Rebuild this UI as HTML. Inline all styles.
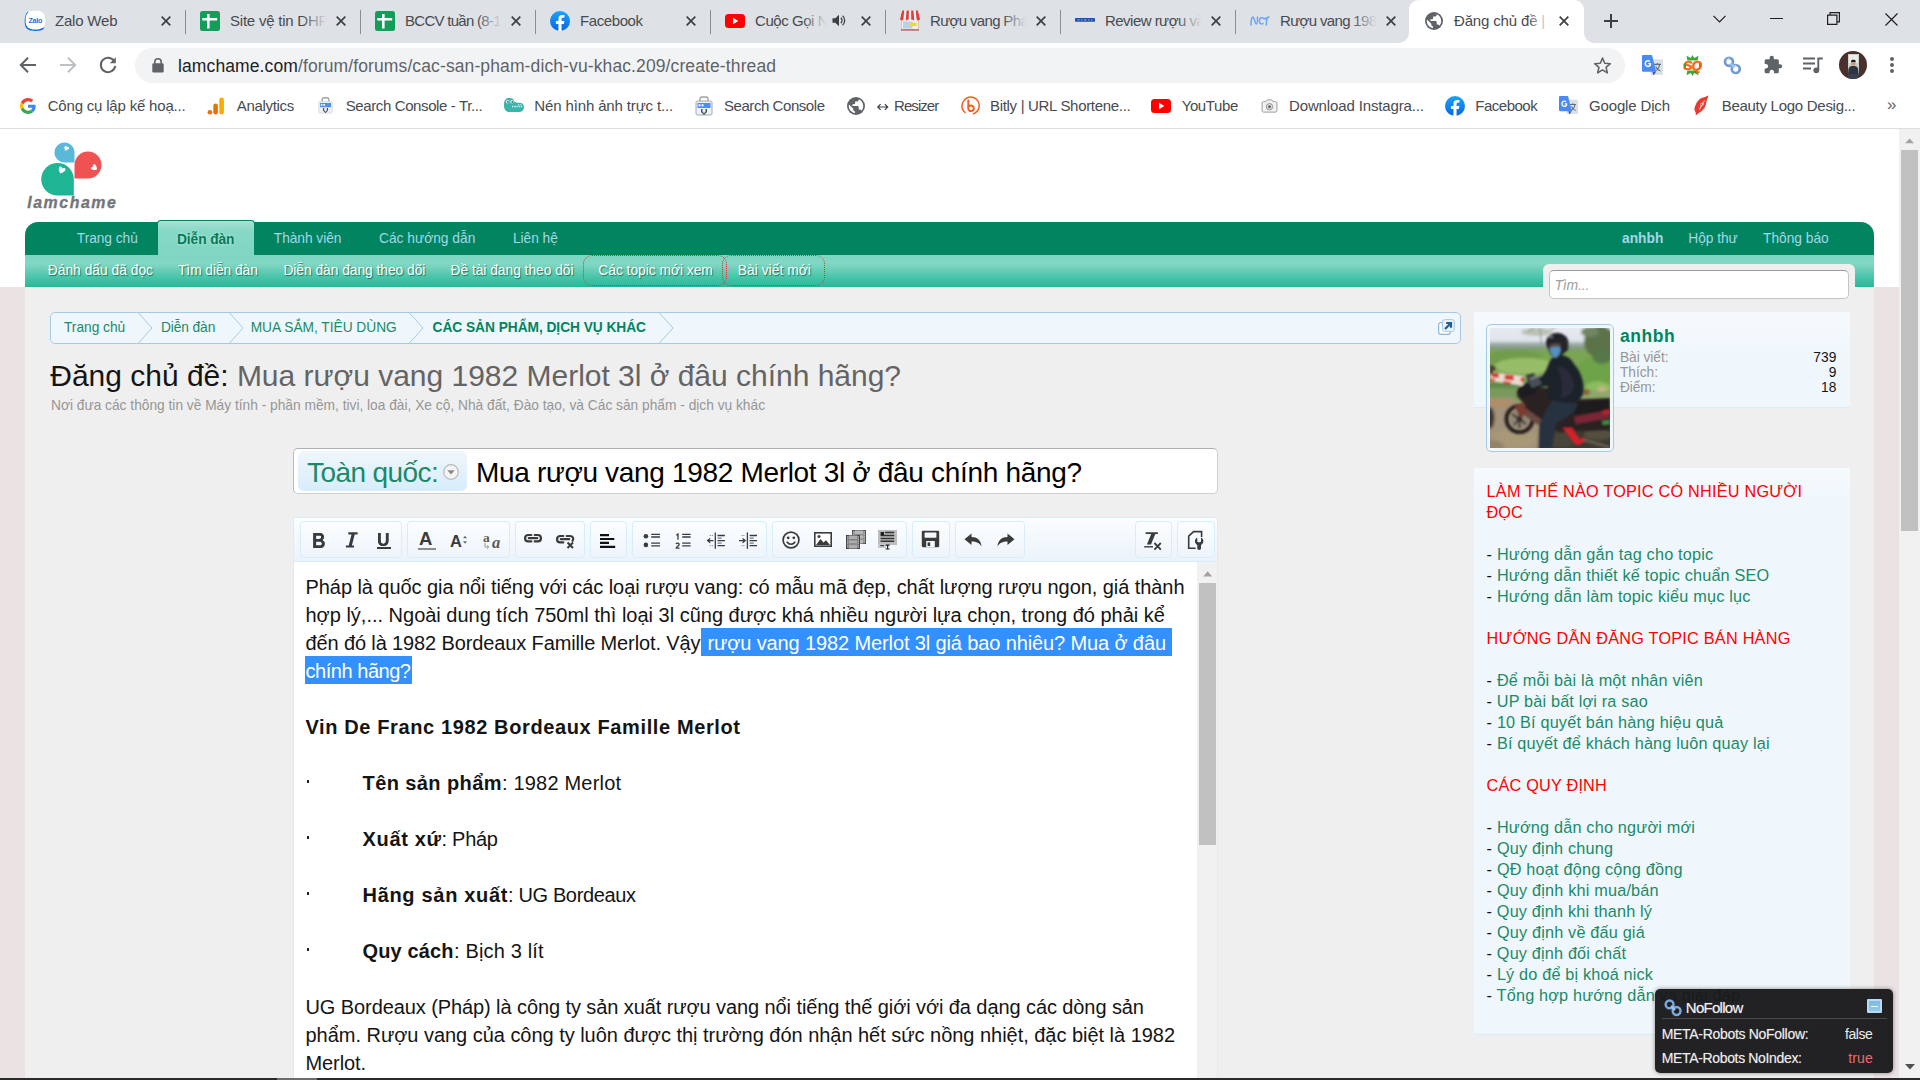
<!DOCTYPE html>
<html><head><meta charset="utf-8"><title>page</title>
<style>

*{margin:0;padding:0;box-sizing:border-box}
html,body{width:1920px;height:1080px;overflow:hidden;background:#fff;font-family:"Liberation Sans",sans-serif}
#root{position:relative;width:1920px;height:1080px;overflow:hidden;background:#efefef}
.a{position:absolute}
.t{position:absolute;white-space:pre;display:block}
svg{position:absolute;overflow:visible}

</style></head><body>
<div id="root">
<div class="a" style="left:0px;top:0px;width:1920px;height:43px;background:#dee1e6"></div>
<svg style="left:1398px;top:0" width="197" height="43" viewBox="0 0 197 43"><path d="M0 43 C6 43 11 39 11 32 L11 11 C11 4 15 0 22 0 L175 0 C182 0 186 4 186 11 L186 32 C186 39 191 43 197 43 Z" fill="#fff"/></svg>
<div class="a" style="left:0px;top:43px;width:1920px;height:45px;background:#fff"></div>
<div class="a" style="left:0px;top:88px;width:1920px;height:40px;background:#fff"></div>
<div class="a" style="left:0px;top:128px;width:1920px;height:1px;background:#dcdee2"></div>
<span class="t" style="left:55.00px;top:10.81px;font-size:15px;line-height:20px;color:#474b4f;letter-spacing:-0.203px;">Zalo Web</span>
<svg style="left:161px;top:15.5px" width="10" height="10" viewBox="0 0 10 10"><path d="M0.7 0.7 L9.3 9.3 M9.3 0.7 L0.7 9.3" stroke="#3c4043" stroke-width="1.7" fill="none"/></svg>
<div class="a" style="left:185.3px;top:10px;width:1.1px;height:24px;background:#8a8d92"></div>
<span class="t" style="left:230.00px;top:10.81px;font-size:15px;line-height:20px;color:#474b4f;letter-spacing:-0.227px;">Site vệ tin DHP</span>
<div class="a" style="left:302px;top:6px;width:40px;height:30px;background:linear-gradient(90deg,rgba(222,225,230,0) 0%,#dee1e6 62%)"></div>
<svg style="left:336px;top:15.5px" width="10" height="10" viewBox="0 0 10 10"><path d="M0.7 0.7 L9.3 9.3 M9.3 0.7 L0.7 9.3" stroke="#3c4043" stroke-width="1.7" fill="none"/></svg>
<div class="a" style="left:360.3px;top:10px;width:1.1px;height:24px;background:#8a8d92"></div>
<span class="t" style="left:405.00px;top:10.81px;font-size:15px;line-height:20px;color:#474b4f;letter-spacing:-0.718px;">BCCV tuần (8-1</span>
<div class="a" style="left:477px;top:6px;width:40px;height:30px;background:linear-gradient(90deg,rgba(222,225,230,0) 0%,#dee1e6 62%)"></div>
<svg style="left:511px;top:15.5px" width="10" height="10" viewBox="0 0 10 10"><path d="M0.7 0.7 L9.3 9.3 M9.3 0.7 L0.7 9.3" stroke="#3c4043" stroke-width="1.7" fill="none"/></svg>
<div class="a" style="left:535.3px;top:10px;width:1.1px;height:24px;background:#8a8d92"></div>
<span class="t" style="left:580.00px;top:10.81px;font-size:15px;line-height:20px;color:#474b4f;letter-spacing:-0.411px;">Facebook</span>
<svg style="left:686px;top:15.5px" width="10" height="10" viewBox="0 0 10 10"><path d="M0.7 0.7 L9.3 9.3 M9.3 0.7 L0.7 9.3" stroke="#3c4043" stroke-width="1.7" fill="none"/></svg>
<div class="a" style="left:710.3px;top:10px;width:1.1px;height:24px;background:#8a8d92"></div>
<span class="t" style="left:755.00px;top:10.81px;font-size:15px;line-height:20px;color:#474b4f;letter-spacing:-0.447px;">Cuộc Gọi N</span>
<div class="a" style="left:802px;top:6px;width:40px;height:30px;background:linear-gradient(90deg,rgba(222,225,230,0) 0%,#dee1e6 62%)"></div>
<svg style="left:861px;top:15.5px" width="10" height="10" viewBox="0 0 10 10"><path d="M0.7 0.7 L9.3 9.3 M9.3 0.7 L0.7 9.3" stroke="#3c4043" stroke-width="1.7" fill="none"/></svg>
<div class="a" style="left:885.3px;top:10px;width:1.1px;height:24px;background:#8a8d92"></div>
<span class="t" style="left:930.00px;top:10.81px;font-size:15px;line-height:20px;color:#474b4f;letter-spacing:-0.656px;">Rượu vang Phá</span>
<div class="a" style="left:1002px;top:6px;width:40px;height:30px;background:linear-gradient(90deg,rgba(222,225,230,0) 0%,#dee1e6 62%)"></div>
<svg style="left:1036px;top:15.5px" width="10" height="10" viewBox="0 0 10 10"><path d="M0.7 0.7 L9.3 9.3 M9.3 0.7 L0.7 9.3" stroke="#3c4043" stroke-width="1.7" fill="none"/></svg>
<div class="a" style="left:1060.3px;top:10px;width:1.1px;height:24px;background:#8a8d92"></div>
<span class="t" style="left:1105.00px;top:10.81px;font-size:15px;line-height:20px;color:#474b4f;letter-spacing:-0.528px;">Review rượu và</span>
<div class="a" style="left:1177px;top:6px;width:40px;height:30px;background:linear-gradient(90deg,rgba(222,225,230,0) 0%,#dee1e6 62%)"></div>
<svg style="left:1211px;top:15.5px" width="10" height="10" viewBox="0 0 10 10"><path d="M0.7 0.7 L9.3 9.3 M9.3 0.7 L0.7 9.3" stroke="#3c4043" stroke-width="1.7" fill="none"/></svg>
<div class="a" style="left:1235.3px;top:10px;width:1.1px;height:24px;background:#8a8d92"></div>
<span class="t" style="left:1280.00px;top:10.81px;font-size:15px;line-height:20px;color:#474b4f;letter-spacing:-0.656px;">Rượu vang 198</span>
<div class="a" style="left:1352px;top:6px;width:40px;height:30px;background:linear-gradient(90deg,rgba(222,225,230,0) 0%,#dee1e6 62%)"></div>
<svg style="left:1386px;top:15.5px" width="10" height="10" viewBox="0 0 10 10"><path d="M0.7 0.7 L9.3 9.3 M9.3 0.7 L0.7 9.3" stroke="#3c4043" stroke-width="1.7" fill="none"/></svg>
<span class="t" style="left:1454.00px;top:10.81px;font-size:15px;line-height:20px;color:#474b4f;letter-spacing:-0.158px;">Đăng chủ đề | Là</span>
<div class="a" style="left:1527px;top:6px;width:40px;height:30px;background:linear-gradient(90deg,rgba(255,255,255,0) 0%,#fff 60%)"></div>
<svg style="left:1558.6px;top:15.5px" width="10" height="10" viewBox="0 0 10 10"><path d="M0.7 0.7 L9.3 9.3 M9.3 0.7 L0.7 9.3" stroke="#3c4043" stroke-width="1.7" fill="none"/></svg>
<svg style="left:1604px;top:13.5px" width="14" height="14" viewBox="0 0 14 14"><path d="M7 0 V14 M0 7 H14" stroke="#3c4043" stroke-width="2" fill="none"/></svg>
<svg style="left:1713px;top:15px" width="13" height="8" viewBox="0 0 13 8"><path d="M0.5 0.8 L6.5 6.8 L12.5 0.8" stroke="#1f1f1f" stroke-width="1.2" fill="none"/></svg>
<div class="a" style="left:1770px;top:18px;width:13px;height:1.2px;background:#1f1f1f"></div>
<svg style="left:1827px;top:12px" width="13" height="13" viewBox="0 0 13 13"><path d="M0.6 3.1 H9.9 V12.4 H0.6 Z M3.1 3.1 V0.6 H12.4 V9.9 H9.9" stroke="#1f1f1f" stroke-width="1.2" fill="none"/></svg>
<svg style="left:1884.5px;top:12.5px" width="13" height="13" viewBox="0 0 13 13"><path d="M0.5 0.5 L12.5 12.5 M12.5 0.5 L0.5 12.5" stroke="#1f1f1f" stroke-width="1.2" fill="none"/></svg>
<svg style="left:24px;top:10px" width="22" height="22" viewBox="0 0 22 22"><path d="M4 1.5 C0.5 4 0 12 1.5 16.5 C3 21 10 21.5 16.5 20.5 C18.5 20 19.8 19 20.3 17.5 L12 19 L4 14 Z" fill="#0b6af0"/><rect x="1.6" y="0.8" width="19.6" height="18.6" rx="7.2" fill="#fff"/><text x="11.3" y="12.6" font-size="7.2" font-weight="700" text-anchor="middle" fill="#1a6df0" font-family="Liberation Sans" letter-spacing="-0.3">Zalo</text></svg>
<svg style="left:200px;top:11px" width="20" height="20" viewBox="0 0 20 20"><rect width="20" height="20" rx="2.5" fill="#129d58"/><path d="M7 3 H9.6 V17.5 H7 Z M2.3 6.9 H17.2 V9.5 H2.3 Z" fill="#fff"/></svg>
<svg style="left:375px;top:11px" width="20" height="20" viewBox="0 0 20 20"><rect width="20" height="20" rx="2.5" fill="#129d58"/><path d="M7 3 H9.6 V17.5 H7 Z M2.3 6.9 H17.2 V9.5 H2.3 Z" fill="#fff"/></svg>
<svg style="left:550px;top:11px" width="20" height="20" viewBox="0 0 20 20"><defs><linearGradient id="fbg550" x1="0" y1="0" x2="0" y2="1"><stop offset="0" stop-color="#19a4fe"/><stop offset="1" stop-color="#0866e2"/></linearGradient></defs><circle cx="10" cy="10" r="10" fill="url(#fbg550)"/><path d="M13.9 12.9 L14.35 10 H11.56 V8.12 C11.56 7.33 11.95 6.56 13.2 6.56 H14.46 V4.1 C14.46 4.1 13.31 3.9 12.21 3.9 C9.92 3.9 8.44 5.29 8.44 7.8 V10 H5.9 V12.9 H8.44 V19.88 C8.95 19.96 9.47 20 10 20 C10.53 20 11.05 19.96 11.56 19.88 V12.9 Z" fill="#fff"/></svg>
<svg style="left:725px;top:14px" width="20" height="14" viewBox="0 0 20 14"><rect width="20" height="14" rx="3.5" fill="#f00"/><path d="M8 3.8 L13.3 7 L8 10.2 Z" fill="#fff"/></svg>
<svg style="left:832px;top:14px" width="14" height="13" viewBox="0 0 14 13"><path d="M0.5 4.3 H3.3 L7 0.8 V12.2 L3.3 8.7 H0.5 Z" fill="#3c4043"/><path d="M8.8 3.8 C10.4 5 10.4 8 8.8 9.2 M10.6 1.8 C13.4 4 13.4 9 10.6 11.2" stroke="#3c4043" stroke-width="1.3" fill="none"/></svg>
<svg style="left:900px;top:10px" width="20" height="21" viewBox="0 0 20 21">
<rect x="1.4" y="9" width="17.2" height="10.6" fill="#eceff2" stroke="#c9b9a4" stroke-width="0.7"/>
<rect x="3" y="11.5" width="9.5" height="7" fill="#b9d0ea"/><rect x="10" y="12.8" width="6.6" height="3.2" fill="#f5d33a"/>
<rect x="1" y="19.3" width="18" height="1.3" fill="#b25a50"/>
<defs><clipPath id="awn"><path d="M2 0.5 H18 L20 8.6 C20 11.2 16 11.2 16 8.6 C16 11.2 12 11.2 12 8.6 C12 11.2 8 11.2 8 8.6 C8 11.2 4 11.2 4 8.6 C4 11.2 0 11.2 0 8.6 Z"/></clipPath></defs>
<g clip-path="url(#awn)"><rect x="0" y="0" width="20" height="11" fill="#f4f4f4"/>
<path d="M2 0 H4.3 L3.2 11 H-0.5 Z M6.6 0 H8.9 L8.7 11 H5.7 Z M11.1 0 H13.4 L14.3 11 H11.3 Z M15.7 0 H18 L20.5 11 H16.8 Z" fill="#e23b3b"/></g>
</svg>
<svg style="left:1075px;top:18.3px" width="20" height="4" viewBox="0 0 20 4"><rect x="0" y="0" width="20" height="3.8" rx="0.8" fill="#1f4fa8"/><path d="M2.5 1.9 H4.5 M6 1.9 H7.5 M9 1.9 H11.5 M13 1.9 H14.5 M16 1.9 H17.5" stroke="#a9c4ee" stroke-width="0.9"/></svg>
<svg style="left:1250px;top:15px" width="20" height="12" viewBox="0 0 20 12"><path d="M1 10 C1 4 2 2 3 2 C4 2 5 9 6.5 9 C7.5 9 7.5 3 7.5 2 M13 3 C10 2 9 5 9.5 7 C10 9.5 12.5 9 13 8.5 M14 4 L19 2 M16.8 2.8 L16.3 10" stroke="#6aa5f5" stroke-width="1.5" fill="none" stroke-linecap="round"/></svg>
<svg style="left:1425px;top:11.5px" width="18" height="18" viewBox="0 0 20 20"><circle cx="10" cy="10" r="10" fill="#5f6368"/><path d="M8.9 17.9 C5 17.4 2 14 2 10 C2 9.4 2.1 8.8 2.2 8.2 L7 13 V14 C7 15.1 7.9 16 9 16 Z M15.9 15.4 C15.6 14.6 14.9 14 14 14 H13 V11 C13 10.4 12.6 10 12 10 H6 V8 H8 C8.6 8 9 7.6 9 7 V5 H11 C12.1 5 13 4.1 13 3 V2.6 C15.9 3.8 18 6.6 18 10 C18 12.1 17.2 14 15.9 15.4 Z" fill="#fff"/></svg>
<svg style="left:19px;top:55.5px" width="18" height="18" viewBox="0 0 18 18"><path d="M17 9 H2.5 M9 1.8 L1.8 9 L9 16.2" stroke="#5f6368" stroke-width="2" fill="none"/></svg>
<svg style="left:59px;top:55.5px" width="18" height="18" viewBox="0 0 18 18"><path d="M1 9 H15.5 M9 1.8 L16.2 9 L9 16.2" stroke="#bdc1c6" stroke-width="2" fill="none"/></svg>
<svg style="left:99px;top:55.5px" width="18" height="18" viewBox="0 0 18 18"><path d="M15.2 5.2 A7.2 7.2 0 1 0 16.2 9.8" stroke="#5f6368" stroke-width="2" fill="none"/><path d="M16.8 1.2 V7.2 H10.8 Z" fill="#5f6368"/></svg>
<div class="a" style="left:135px;top:48px;width:1490px;height:35px;background:#f1f3f4;border-radius:17.5px"></div>
<svg style="left:151.5px;top:58px" width="12" height="15" viewBox="0 0 12 15"><rect x="0.3" y="5.3" width="11.4" height="9.2" rx="1.3" fill="#5f6368"/><path d="M2.8 5.8 V3.8 C2.8 -0.2 9.2 -0.2 9.2 3.8 V5.8" stroke="#5f6368" stroke-width="1.6" fill="none"/></svg>
<span class="t" style="left:178.00px;top:55.41px;font-size:17.5px;line-height:23px;color:#5f6368;letter-spacing:0.112px;"><span style="color:#202124">lamchame.com</span>/forum/forums/cac-san-pham-dich-vu-khac.209/create-thread</span>
<svg style="left:1593px;top:55.5px" width="19" height="19" viewBox="0 0 24 24"><path d="M12 2.6 L14.8 9.1 L21.9 9.7 L16.5 14.4 L18.1 21.3 L12 17.6 L5.9 21.3 L7.5 14.4 L2.1 9.7 L9.2 9.1 Z" stroke="#5f6368" stroke-width="2" fill="none" stroke-linejoin="round"/></svg>
<svg style="left:1642px;top:55px" width="21" height="21" viewBox="0 0 20 20"><rect x="8" y="4" width="12" height="15" rx="1.2" fill="#dcdfe3"/><path d="M11.5 9 H18 M14.7 7.5 V9 M12.5 15 C15 14 16.5 11.5 16.8 9 M13 11 C14 13 15.5 14.5 17.5 15.2" stroke="#5f6f80" stroke-width="1.1" fill="none"/><path d="M1.2 0 H9.5 L13.5 16 H1.2 C0.5 16 0 15.5 0 14.8 V1.2 C0 0.5 0.5 0 1.2 0 Z" fill="#4a8af4"/><path d="M9.8 16 L13.5 16 L11 19.5 Z" fill="#3a5fc0"/><path d="M8.6 7.6 H6 V8.9 H7.4 C7.2 9.8 6.5 10.3 5.7 10.3 C4.6 10.3 3.8 9.4 3.8 8.2 C3.8 7 4.6 6.1 5.7 6.1 C6.3 6.1 6.7 6.3 7 6.6 L7.9 5.7 C7.3 5.1 6.6 4.8 5.7 4.8 C3.9 4.8 2.4 6.3 2.4 8.2 C2.4 10.1 3.9 11.6 5.7 11.6 C7.6 11.6 8.8 10.3 8.8 8.3 C8.8 8 8.7 7.8 8.6 7.6 Z" fill="#fff"/></svg>
<svg style="left:1683px;top:55px" width="19" height="21" viewBox="0 0 19 21"><path d="M9.5 0 L11.2 3 L15.5 0.8 L14.6 5.5 L4.4 5.5 L3.5 0.8 L7.8 3 Z" fill="#3aa935"/><path d="M9.5 21 L11.2 18 L15.5 20.2 L14.6 15.5 L4.4 15.5 L3.5 20.2 L7.8 18 Z" fill="#3aa935"/><path d="M0.5 9 L3 7 L3 14 L0.5 12.5 Z M18.5 9 L16 7 L16 14 L18.5 12.5 Z" fill="#3aa935"/><text x="9.3" y="15.3" font-size="13.5" font-weight="700" font-style="italic" text-anchor="middle" fill="#f26a10" stroke="#f26a10" stroke-width="0.5" font-family="Liberation Sans" letter-spacing="-1">SQ</text></svg>
<svg style="left:1723px;top:56px" width="19" height="19" viewBox="0 0 19 19"><circle cx="6" cy="5.8" r="4" stroke="#6f9ccf" stroke-width="2.7" fill="none"/><circle cx="12.8" cy="13" r="4" stroke="#6f9ccf" stroke-width="2.7" fill="none"/><path d="M7.4 7.4 L11.4 11.4" stroke="#9dbfe4" stroke-width="2.6"/><path d="M3.2 4.2 A3.6 3.6 0 0 1 6.6 2.2 M10 11.4 A3.6 3.6 0 0 1 13.4 9.4" stroke="#c3d9f0" stroke-width="1" fill="none"/></svg>
<svg style="left:1762.5px;top:55px" width="20" height="20" viewBox="0 0 24 24"><path d="M20.5 11 H19 V7 C19 5.9 18.1 5 17 5 H13 V3.5 C13 2.1 11.9 1 10.5 1 C9.1 1 8 2.1 8 3.5 V5 H4 C2.9 5 2 5.9 2 7 V10.8 H3.5 C5 10.8 6.2 12 6.2 13.5 C6.2 15 5 16.2 3.5 16.2 H2 V20 C2 21.1 2.9 22 4 22 H7.8 V20.5 C7.8 19 9 17.8 10.5 17.8 C12 17.8 13.2 19 13.2 20.5 V22 H17 C18.1 22 19 21.1 19 20 V16 H20.5 C21.9 16 23 14.9 23 13.5 C23 12.1 21.9 11 20.5 11 Z" fill="#5f6368"/></svg>
<svg style="left:1802.5px;top:57px" width="20" height="17" viewBox="0 0 20 17"><path d="M0 1.5 H12 M0 6.5 H12 M0 11.5 H8" stroke="#5f6368" stroke-width="1.9" fill="none"/><circle cx="13.3" cy="13.3" r="2.9" fill="#5f6368"/><path d="M15.3 13.3 V1.5 H19.8" stroke="#5f6368" stroke-width="1.9" fill="none"/></svg>
<svg style="left:1839px;top:51px" width="28" height="28" viewBox="0 0 28 28"><defs><clipPath id="cav"><circle cx="14" cy="14" r="14"/></clipPath></defs><g clip-path="url(#cav)"><rect width="28" height="28" fill="#4a2f2c"/><rect x="9" y="3" width="11" height="22" fill="#c9cfc9"/><rect x="10" y="4" width="9" height="8" fill="#e9eeea"/><ellipse cx="14.3" cy="12" rx="2.3" ry="2.7" fill="#c79a83"/><path d="M12 9.8 C12.5 8.3 16.2 8.3 16.7 9.8 L16.6 11 H12.1Z" fill="#1b1b1d"/><path d="M8.5 27 L9.5 18 C10 15.5 12 15 14.3 15 C16.6 15 18.6 15.5 19.1 18 L20.1 27 Z" fill="#2e3440"/><path d="M9 23 H20 V28 H9Z" fill="#39404e"/></g></svg>
<div class="a" style="left:1890.4px;top:57.3px;width:4px;height:4px;background:#5f6368;border-radius:2px"></div>
<div class="a" style="left:1890.4px;top:63.3px;width:4px;height:4px;background:#5f6368;border-radius:2px"></div>
<div class="a" style="left:1890.4px;top:69.3px;width:4px;height:4px;background:#5f6368;border-radius:2px"></div>
<span class="t" style="left:47.70px;top:95.81px;font-size:15px;line-height:20px;color:#474b4f;letter-spacing:-0.188px;">Công cụ lập kế hoạ...</span>
<span class="t" style="left:236.70px;top:95.81px;font-size:15px;line-height:20px;color:#474b4f;letter-spacing:-0.304px;">Analytics</span>
<span class="t" style="left:345.70px;top:95.81px;font-size:15px;line-height:20px;color:#474b4f;letter-spacing:-0.385px;">Search Console - Tr...</span>
<span class="t" style="left:534.30px;top:95.81px;font-size:15px;line-height:20px;color:#474b4f;letter-spacing:-0.133px;">Nén hình ảnh trực t...</span>
<span class="t" style="left:724.00px;top:95.81px;font-size:15px;line-height:20px;color:#474b4f;letter-spacing:-0.441px;">Search Console</span>
<span class="t" style="left:894.00px;top:95.81px;font-size:15px;line-height:20px;color:#474b4f;letter-spacing:-0.927px;">Resizer</span>
<span class="t" style="left:990.00px;top:95.81px;font-size:15px;line-height:20px;color:#474b4f;letter-spacing:-0.313px;">Bitly | URL Shortene...</span>
<span class="t" style="left:1181.70px;top:95.81px;font-size:15px;line-height:20px;color:#474b4f;letter-spacing:-0.392px;">YouTube</span>
<span class="t" style="left:1289.00px;top:95.81px;font-size:15px;line-height:20px;color:#474b4f;letter-spacing:-0.136px;">Download Instagra...</span>
<span class="t" style="left:1475.30px;top:95.81px;font-size:15px;line-height:20px;color:#474b4f;letter-spacing:-0.496px;">Facebook</span>
<span class="t" style="left:1589.00px;top:95.81px;font-size:15px;line-height:20px;color:#474b4f;letter-spacing:-0.155px;">Google Dịch</span>
<span class="t" style="left:1721.70px;top:95.81px;font-size:15px;line-height:20px;color:#474b4f;letter-spacing:-0.277px;">Beauty Logo Desig...</span>
<span class="t" style="left:1887.00px;top:93.50px;font-size:17px;line-height:22px;color:#5f6368;letter-spacing:-0.969px;">»</span>
<svg style="left:20px;top:97.5px" width="16" height="16" viewBox="0 0 48 48"><path fill="#EA4335" d="M24 9.5c3.54 0 6.71 1.22 9.21 3.6l6.85-6.85C35.9 2.38 30.47 0 24 0 14.62 0 6.51 5.38 2.56 13.22l7.98 6.19C12.43 13.72 17.74 9.5 24 9.5z"/><path fill="#4285F4" d="M46.98 24.55c0-1.57-.15-3.09-.38-4.55H24v9.02h12.94c-.58 2.96-2.26 5.48-4.78 7.18l7.73 6c4.51-4.18 7.09-10.36 7.09-17.65z"/><path fill="#FBBC05" d="M10.53 28.59c-.48-1.45-.76-2.99-.76-4.59s.27-3.14.76-4.59l-7.98-6.19C.92 16.46 0 20.12 0 24c0 3.88.92 7.54 2.56 10.78l7.97-6.19z"/><path fill="#34A853" d="M24 48c6.48 0 11.93-2.13 15.89-5.81l-7.73-6c-2.15 1.45-4.92 2.3-8.16 2.3-6.26 0-11.57-4.22-13.47-9.91l-7.98 6.19C6.51 42.62 14.62 48 24 48z"/></svg>
<svg style="left:207px;top:96.5px" width="18" height="18" viewBox="0 0 18 18"><rect x="12.3" y="0.5" width="4.6" height="17" rx="2.3" fill="#f9ab00"/><rect x="6.3" y="6.5" width="4.6" height="11" rx="2.3" fill="#e37400"/><circle cx="2.9" cy="15.2" r="2.3" fill="#e37400"/></svg>
<svg style="left:316.5px;top:97px" width="17" height="17" viewBox="0 0 20 20"><rect x="2" y="5" width="16" height="14" rx="1.5" fill="#eef0f2" stroke="#d6dadd" stroke-width="0.9"/><path d="M6 5 V3 C6 1.5 7 1 8 1 H12 C13 1 14 1.5 14 3 V5" stroke="#8a8f94" stroke-width="1.3" fill="none"/><rect x="3.5" y="7" width="13" height="5" fill="#4d8df6"/><rect x="4.5" y="8.3" width="2" height="2" fill="#fff"/><rect x="7.5" y="8.3" width="2" height="2" fill="#fff"/><path d="M8.5 13 V15.5 L10 17.3 L11.5 15.5 V13 H13 V16 L10 19 L7 16 V13 Z" fill="#455a64"/></svg>
<svg style="left:503.7px;top:98px" width="20" height="14" viewBox="0 0 20 14"><path d="M0 6.5 C0 1.8 2 0 5.5 0 C8 0 9.3 0.8 9.8 2.3 C10.5 4.3 12 4.8 15 4.8 C18.3 4.8 20 6.3 20 9 C20 12.3 18 14 15 14 L5.5 14 C1.8 14 0 11.3 0 8 Z" fill="#3bb5ac"/><circle cx="3.6" cy="3.7" r="1.7" fill="#e9f6f5"/><circle cx="8" cy="3.7" r="1.7" fill="#e9f6f5"/><circle cx="3.9" cy="3.9" r="0.85" fill="#2b5f60"/><circle cx="8.3" cy="3.9" r="0.85" fill="#2b5f60"/><path d="M8 8.6 H19" stroke="#dff3f1" stroke-width="1.5" stroke-dasharray="1.3 0.9"/><path d="M14 6.6 H18" stroke="#dff3f1" stroke-width="0.9" stroke-dasharray="1 0.8"/></svg>
<svg style="left:694px;top:95.5px" width="20" height="20" viewBox="0 0 20 20"><rect x="2" y="5" width="16" height="14" rx="1.5" fill="#eef0f2" stroke="#9aa0a6" stroke-width="0.9"/><path d="M6 5 V3 C6 1.5 7 1 8 1 H12 C13 1 14 1.5 14 3 V5" stroke="#9aa0a6" stroke-width="1.3" fill="none"/><rect x="3.5" y="7" width="13" height="5" fill="#4d8df6"/><rect x="4.5" y="8.3" width="2" height="2" fill="#fff"/><rect x="7.5" y="8.3" width="2" height="2" fill="#fff"/><path d="M8.5 13 V15.5 L10 17.3 L11.5 15.5 V13 H13 V16 L10 19 L7 16 V13 Z" fill="#455a64"/></svg>
<svg style="left:846.5px;top:96.5px" width="18" height="18" viewBox="0 0 20 20"><circle cx="10" cy="10" r="10" fill="#5f6368"/><path d="M8.9 17.9 C5 17.4 2 14 2 10 C2 9.4 2.1 8.8 2.2 8.2 L7 13 V14 C7 15.1 7.9 16 9 16 Z M15.9 15.4 C15.6 14.6 14.9 14 14 14 H13 V11 C13 10.4 12.6 10 12 10 H6 V8 H8 C8.6 8 9 7.6 9 7 V5 H11 C12.1 5 13 4.1 13 3 V2.6 C15.9 3.8 18 6.6 18 10 C18 12.1 17.2 14 15.9 15.4 Z" fill="#fff"/></svg>
<svg style="left:960.5px;top:96px" width="19" height="19" viewBox="0 0 19 19"><path d="M4.5 17 C1.5 14.5 0.3 10.5 1.5 7 C3 2.5 8 0 12.5 1.5 C17 3 19.3 7.8 17.8 12.3 C16.8 15.2 14.5 17.2 11.8 18" stroke="#ee6123" stroke-width="1.5" fill="none"/><path d="M7.3 4.5 V12.5 C7.3 16 12.8 16 12.8 12.3 C12.8 9.5 9.5 8.8 7.6 10.6" stroke="#ee6123" stroke-width="2" fill="none" stroke-linecap="round"/></svg>
<svg style="left:1151px;top:98.5px" width="20" height="14" viewBox="0 0 20 14"><rect width="20" height="14" rx="3.5" fill="#f00"/><path d="M8 3.8 L13.3 7 L8 10.2 Z" fill="#fff"/></svg>
<svg style="left:1260.5px;top:99px" width="17" height="14" viewBox="0 0 19 16"><path d="M1 4.5 C1 3.7 1.7 3 2.5 3 H5.5 L6.8 1 H12.2 L13.5 3 H16.5 C17.3 3 18 3.7 18 4.5 V13.5 C18 14.3 17.3 15 16.5 15 H2.5 C1.7 15 1 14.3 1 13.5 Z" fill="#f2f2f2" stroke="#9b9b9b" stroke-width="1.1"/><circle cx="9.5" cy="8.8" r="3.7" fill="#d5d5d5" stroke="#8e8e8e" stroke-width="1"/><circle cx="9.5" cy="8.8" r="1.5" fill="#555"/></svg>
<svg style="left:1445px;top:96px" width="20" height="20" viewBox="0 0 20 20"><defs><linearGradient id="fbg1445" x1="0" y1="0" x2="0" y2="1"><stop offset="0" stop-color="#19a4fe"/><stop offset="1" stop-color="#0866e2"/></linearGradient></defs><circle cx="10" cy="10" r="10" fill="url(#fbg1445)"/><path d="M13.9 12.9 L14.35 10 H11.56 V8.12 C11.56 7.33 11.95 6.56 13.2 6.56 H14.46 V4.1 C14.46 4.1 13.31 3.9 12.21 3.9 C9.92 3.9 8.44 5.29 8.44 7.8 V10 H5.9 V12.9 H8.44 V19.88 C8.95 19.96 9.47 20 10 20 C10.53 20 11.05 19.96 11.56 19.88 V12.9 Z" fill="#fff"/></svg>
<svg style="left:1559px;top:96px" width="19" height="19" viewBox="0 0 20 20"><rect x="8" y="4" width="12" height="15" rx="1.2" fill="#dcdfe3"/><path d="M11.5 9 H18 M14.7 7.5 V9 M12.5 15 C15 14 16.5 11.5 16.8 9 M13 11 C14 13 15.5 14.5 17.5 15.2" stroke="#5f6f80" stroke-width="1.1" fill="none"/><path d="M1.2 0 H9.5 L13.5 16 H1.2 C0.5 16 0 15.5 0 14.8 V1.2 C0 0.5 0.5 0 1.2 0 Z" fill="#4a8af4"/><path d="M9.8 16 L13.5 16 L11 19.5 Z" fill="#3a5fc0"/><path d="M8.6 7.6 H6 V8.9 H7.4 C7.2 9.8 6.5 10.3 5.7 10.3 C4.6 10.3 3.8 9.4 3.8 8.2 C3.8 7 4.6 6.1 5.7 6.1 C6.3 6.1 6.7 6.3 7 6.6 L7.9 5.7 C7.3 5.1 6.6 4.8 5.7 4.8 C3.9 4.8 2.4 6.3 2.4 8.2 C2.4 10.1 3.9 11.6 5.7 11.6 C7.6 11.6 8.8 10.3 8.8 8.3 C8.8 8 8.7 7.8 8.6 7.6 Z" fill="#fff"/></svg>
<svg style="left:1693px;top:95px" width="17" height="21" viewBox="0 0 17 21"><path d="M15.5 0.5 C13 1.2 12.5 2.2 10.5 2.4 C7 3 4.2 6 2.8 9.5 C2 11.5 1.2 13 1.5 15 C1.8 16.5 2.8 17 2.8 18.5 L2.6 20.6 C4.5 19 6 17.8 8 16.5 C11 14.5 12.8 11.5 13.2 8 C13.5 5.5 14.6 3 15.5 0.5 Z" fill="#e93a30"/><path d="M6.5 14.5 C8.2 11 10 8.5 11.5 5.5 M7.3 9.3 C9 7.4 11.3 7.6 10.2 9.6 C9.4 10.9 8 11.2 7 11" stroke="#fbe4e2" stroke-width="0.9" fill="none"/></svg>
<svg style="left:877.3px;top:102.5px" width="11.5" height="8" viewBox="0 0 11.5 8"><path d="M1 4 H10.5 M3.6 1.2 L0.8 4 L3.6 6.8 M7.9 1.2 L10.7 4 L7.9 6.8" stroke="#3c4043" stroke-width="1.2" fill="none"/></svg>
<div class="a" style="left:0px;top:129px;width:1899px;height:158px;background:#fff"></div>
<div class="a" style="left:0px;top:287px;width:1899px;height:793px;background:#ebe3e3"></div>
<div class="a" style="left:25px;top:287px;width:1849px;height:793px;background:#efefef"></div>
<div class="a" style="left:25px;top:287px;width:1849px;height:1px;background:#f7f1f1"></div>
<div class="a" style="left:1899px;top:129px;width:21px;height:951px;background:#f1f1f1"></div>
<div class="a" style="left:1901px;top:150px;width:17px;height:381px;background:#c1c1c1"></div>
<svg style="left:1905px;top:137.5px" width="9.2" height="5.3" viewBox="0 0 10 6"><path d="M0 6 L5 0.5 L10 6 Z" fill="#a3a3a3"/></svg>
<svg style="left:1905px;top:1064px" width="10" height="6" viewBox="0 0 10 6"><path d="M0 0 L5 5.5 L10 0 Z" fill="#505050"/></svg>
<svg style="left:25px;top:138px" width="95" height="75" viewBox="0 0 95 75">
<path d="M39.5 4.5 C45 4.5 49.5 9 49.5 14.5 V24.5 H39.5 C34 24.5 29.5 20 29.5 14.5 C29.5 9 34 4.5 39.5 4.5 Z" fill="#5ab8d9"/>
<path d="M63 13.5 C70.5 13.5 76.5 19.5 76.5 27 C76.5 34.5 70.5 40.5 63 40.5 H49.5 V27 C49.5 19.5 55.5 13.5 63 13.5 Z" fill="#ee5253"/>
<path d="M32.5 25 C41.5 25 48.8 32.3 48.8 41.3 V57.6 H32.5 C23.5 57.6 16.2 50.3 16.2 41.3 C16.2 32.3 23.5 25 32.5 25 Z" fill="#1db594"/>
<path d="M0 0.9 C-1.25 0 -1.1 -0.9 -0.5 -0.9 C-0.2 -0.9 0 -0.7 0 -0.45 C0 -0.7 0.2 -0.9 0.5 -0.9 C1.1 -0.9 1.25 0 0 0.9 Z" transform="translate(41.3 10.6) rotate(25) scale(2.5)" fill="#fff"/>
<path d="M0 0.9 C-1.25 0 -1.1 -0.9 -0.5 -0.9 C-0.2 -0.9 0 -0.7 0 -0.45 C0 -0.7 0.2 -0.9 0.5 -0.9 C1.1 -0.9 1.25 0 0 0.9 Z" transform="translate(36.6 32.4) rotate(22) scale(3.6)" fill="#fff"/>
<path d="M0 0.9 C-1.25 0 -1.1 -0.9 -0.5 -0.9 C-0.2 -0.9 0 -0.7 0 -0.45 C0 -0.7 0.2 -0.9 0.5 -0.9 C1.1 -0.9 1.25 0 0 0.9 Z" transform="translate(69.6 29.8) rotate(-55) scale(3.2)" fill="#fff"/>
<text x="2.3" y="69.6" font-size="15.9" font-weight="700" font-style="italic" fill="#74767a" stroke="#74767a" stroke-width="0.35" font-family="Liberation Sans" textLength="88.5" lengthAdjust="spacing">lamchame</text>
</svg>
<div class="a" style="left:25px;top:222px;width:1849px;height:34px;background:#008560;border-radius:13px 13px 0 0"></div>
<div class="a" style="left:25px;top:255px;width:1849px;height:32px;background:linear-gradient(180deg,#7dd6c1 0%,#81d7c4 25%,#7ad4bf 34%,#3dc1a4 78%,#2eba9c 96%,#1cb592 100%)"></div>
<div class="a" style="left:157px;top:220px;width:98px;height:35px;background:linear-gradient(180deg,#a8e2d4 0%,#86d8c5 30%,#80d6c2 100%);border:1px solid #008560;border-bottom:none;border-radius:4px 4px 0 0"></div>
<div class="a" style="left:158px;top:252px;width:96px;height:5px;background:#80d6c2"></div>
<span class="t" style="left:76.80px;top:230.00px;font-size:13.75px;line-height:18px;color:#a5d7e6;letter-spacing:-0.051px;">Trang chủ</span>
<span class="t" style="left:177.00px;top:230.50px;font-size:13.75px;line-height:18px;color:#057a58;font-weight:700;letter-spacing:-0.080px;text-shadow:0 0 3px rgba(255,255,255,.55);">Diễn đàn</span>
<span class="t" style="left:273.80px;top:230.00px;font-size:13.75px;line-height:18px;color:#a5d7e6;letter-spacing:-0.039px;">Thành viên</span>
<span class="t" style="left:379.00px;top:230.00px;font-size:13.75px;line-height:18px;color:#a5d7e6;letter-spacing:0.008px;">Các hướng dẫn</span>
<span class="t" style="left:513.00px;top:230.00px;font-size:13.75px;line-height:18px;color:#a5d7e6;letter-spacing:-0.054px;">Liên hệ</span>
<span class="t" style="left:1622.00px;top:230.00px;font-size:13.75px;line-height:18px;color:#a5d7e6;font-weight:700;letter-spacing:0.012px;">anhbh</span>
<span class="t" style="left:1688.30px;top:230.00px;font-size:13.75px;line-height:18px;color:#a5d7e6;letter-spacing:-0.053px;">Hộp thư</span>
<span class="t" style="left:1763.00px;top:230.00px;font-size:13.75px;line-height:18px;color:#a5d7e6;">Thông báo</span>
<span class="t" style="left:47.80px;top:262.00px;font-size:13.75px;line-height:18px;color:#fff;letter-spacing:0.032px;text-shadow:1px 1px 1px rgba(0,90,65,.75);">Đánh dấu đã đọc</span>
<span class="t" style="left:178.00px;top:262.00px;font-size:13.75px;line-height:18px;color:#fff;letter-spacing:-0.042px;text-shadow:1px 1px 1px rgba(0,90,65,.75);">Tìm diễn đàn</span>
<span class="t" style="left:283.40px;top:262.00px;font-size:13.75px;line-height:18px;color:#fff;letter-spacing:-0.010px;text-shadow:1px 1px 1px rgba(0,90,65,.75);">Diễn đàn đang theo dõi</span>
<span class="t" style="left:450.50px;top:262.00px;font-size:13.75px;line-height:18px;color:#fff;letter-spacing:-0.005px;text-shadow:1px 1px 1px rgba(0,90,65,.75);">Đề tài đang theo dõi</span>
<div class="a" style="left:583px;top:255px;width:144px;height:31px;border:1px dotted #d0392f;border-radius:9px"></div>
<div class="a" style="left:722px;top:255px;width:103px;height:31px;border:1px dotted #d0392f;border-radius:9px"></div>
<span class="t" style="left:598.30px;top:262.00px;font-size:13.75px;line-height:18px;color:#fff;letter-spacing:0.002px;text-shadow:1px 1px 1px rgba(0,90,65,.75);">Các topic mới xem</span>
<span class="t" style="left:737.80px;top:262.00px;font-size:13.75px;line-height:18px;color:#fff;letter-spacing:0.051px;text-shadow:1px 1px 1px rgba(0,90,65,.75);">Bài viết mới</span>
<div class="a" style="left:1543px;top:264px;width:312px;height:40px;background:#efefef;border-radius:6px 6px 0 0"></div>
<div class="a" style="left:1549px;top:270px;width:299.5px;height:28.5px;background:#fff;border:1px solid #c4c4c4;border-top-color:#9a9a9a;border-radius:5px"></div>
<span class="t" style="left:1554.40px;top:276.01px;font-size:14px;line-height:18px;color:#a0a0a0;font-style:italic;letter-spacing:-0.136px;">Tìm...</span>
<div class="a" style="left:50px;top:312px;width:1411px;height:32px;background:#f0f7fc;border:1px solid #a5cae4;border-radius:5px"></div>
<svg style="left:137.7px;top:313px" width="15" height="30" viewBox="0 0 15 30"><path d="M0.5 0 L14 15 L0.5 30" stroke="#a5cae4" stroke-width="1" fill="none"/></svg>
<svg style="left:228.8px;top:313px" width="15" height="30" viewBox="0 0 15 30"><path d="M0.5 0 L14 15 L0.5 30" stroke="#a5cae4" stroke-width="1" fill="none"/></svg>
<svg style="left:409.3px;top:313px" width="15" height="30" viewBox="0 0 15 30"><path d="M0.5 0 L14 15 L0.5 30" stroke="#a5cae4" stroke-width="1" fill="none"/></svg>
<svg style="left:659.2px;top:313px" width="15" height="30" viewBox="0 0 15 30"><path d="M0.5 0 L14 15 L0.5 30" stroke="#a5cae4" stroke-width="1" fill="none"/></svg>
<span class="t" style="left:64.00px;top:318.61px;font-size:13.75px;line-height:18px;color:#1a8a68;letter-spacing:-0.026px;">Trang chủ</span>
<span class="t" style="left:161.00px;top:318.61px;font-size:13.75px;line-height:18px;color:#1a8a68;letter-spacing:-0.107px;">Diễn đàn</span>
<span class="t" style="left:250.70px;top:318.61px;font-size:13.75px;line-height:18px;color:#1a8a68;letter-spacing:-0.020px;">MUA SẮM, TIÊU DÙNG</span>
<span class="t" style="left:432.60px;top:318.61px;font-size:13.75px;line-height:18px;color:#008560;font-weight:700;letter-spacing:-0.050px;">CÁC SẢN PHẨM, DỊCH VỤ KHÁC</span>
<svg style="left:1437.5px;top:318.5px" width="17" height="17" viewBox="0 0 17 17"><rect x="0.7" y="3.7" width="11.6" height="11.6" rx="2" fill="#fff" stroke="#8fb6d6" stroke-width="1.2"/><rect x="4.5" y="0.6" width="11.8" height="11.8" rx="2.2" fill="#eaf3fa" stroke="#a5cae4" stroke-width="1"/><path d="M7 10 L12.3 4.7 M8.2 4 H13 V8.8" stroke="#1f5f8f" stroke-width="2.2" fill="none"/></svg>
<span class="t" style="left:50.30px;top:356.00px;font-size:30px;line-height:39px;color:#141414;letter-spacing:-0.016px;">Đăng chủ đề: <span style="color:#646464">Mua rượu vang 1982 Merlot 3l ở đâu chính hãng?</span></span>
<span class="t" style="left:51.00px;top:396.61px;font-size:13.75px;line-height:18px;color:#969696;letter-spacing:-0.004px;">Nơi đưa các thông tin về Máy tính - phần mềm, tivi, loa đài, Xe cộ, Nhà đất, Đào tạo, và Các sản phẩm - dịch vụ khác</span>
<div class="a" style="left:293px;top:447.5px;width:924.5px;height:46.5px;background:#fff;border:1px solid #cfcfcf;border-top-color:#b0b0b0;border-left-color:#bcbcbc;border-radius:5px"></div>
<div class="a" style="left:298px;top:450.5px;width:169px;height:40.5px;background:linear-gradient(180deg,#f0f7fc 0%,#e4f1fb 50%,#d7edfc 100%);border-radius:6px"></div>
<span class="t" style="left:307.00px;top:454.50px;font-size:28px;line-height:36px;color:#1a8a68;letter-spacing:-0.583px;">Toàn quốc:</span>
<svg style="left:442.5px;top:463.7px" width="16" height="16" viewBox="0 0 16 16"><circle cx="8" cy="8" r="7.3" fill="#f4f4f4" stroke="#b9b9b9" stroke-width="1.2"/><path d="M4.3 6.2 H11.7 L8 10.6 Z" fill="#8a8a8a"/></svg>
<span class="t" style="left:476.00px;top:454.50px;font-size:28px;line-height:36px;color:#000;letter-spacing:-0.323px;">Mua rượu vang 1982 Merlot 3l ở đâu chính hãng?</span>
<div class="a" style="left:293px;top:517px;width:925px;height:564px;background:#fff;border:1px solid #d7edfc"></div>
<div class="a" style="left:294px;top:518px;width:923px;height:44px;background:linear-gradient(180deg,#fbfdff 0%,#f3f8fd 50%,#ebf3fa 100%);border-bottom:1px solid #d7edfc"></div>
<div class="a" style="left:300px;top:521px;width:102px;height:37px;background:linear-gradient(180deg,#fcfeff 0%,#f4f9fd 55%,#edf4fb 100%);border:1px solid #d7edfc;border-radius:4px"></div>
<div class="a" style="left:407px;top:521px;width:103px;height:37px;background:linear-gradient(180deg,#fcfeff 0%,#f4f9fd 55%,#edf4fb 100%);border:1px solid #d7edfc;border-radius:4px"></div>
<div class="a" style="left:515px;top:521px;width:70px;height:37px;background:linear-gradient(180deg,#fcfeff 0%,#f4f9fd 55%,#edf4fb 100%);border:1px solid #d7edfc;border-radius:4px"></div>
<div class="a" style="left:590px;top:521px;width:37px;height:37px;background:linear-gradient(180deg,#fcfeff 0%,#f4f9fd 55%,#edf4fb 100%);border:1px solid #d7edfc;border-radius:4px"></div>
<div class="a" style="left:632px;top:521px;width:135px;height:37px;background:linear-gradient(180deg,#fcfeff 0%,#f4f9fd 55%,#edf4fb 100%);border:1px solid #d7edfc;border-radius:4px"></div>
<div class="a" style="left:772px;top:521px;width:135px;height:37px;background:linear-gradient(180deg,#fcfeff 0%,#f4f9fd 55%,#edf4fb 100%);border:1px solid #d7edfc;border-radius:4px"></div>
<div class="a" style="left:912px;top:521px;width:38px;height:37px;background:linear-gradient(180deg,#fcfeff 0%,#f4f9fd 55%,#edf4fb 100%);border:1px solid #d7edfc;border-radius:4px"></div>
<div class="a" style="left:955px;top:521px;width:70px;height:37px;background:linear-gradient(180deg,#fcfeff 0%,#f4f9fd 55%,#edf4fb 100%);border:1px solid #d7edfc;border-radius:4px"></div>
<div class="a" style="left:1135px;top:521px;width:37px;height:37px;background:linear-gradient(180deg,#fcfeff 0%,#f4f9fd 55%,#edf4fb 100%);border:1px solid #d7edfc;border-radius:4px"></div>
<div class="a" style="left:1177px;top:521px;width:38px;height:37px;background:linear-gradient(180deg,#fcfeff 0%,#f4f9fd 55%,#edf4fb 100%);border:1px solid #d7edfc;border-radius:4px"></div>
<div class="a" style="left:1197px;top:562px;width:20px;height:518px;background:#f1f1f1"></div>
<div class="a" style="left:1199px;top:583px;width:17px;height:262px;background:#c1c1c1"></div>
<svg style="left:1203px;top:571px" width="9.4" height="5.4" viewBox="0 0 10 6"><path d="M0 6 L5 0.3 L10 6 Z" fill="#a3a3a3"/></svg>
<span class="t" style="left:311.60px;top:526.50px;font-size:21.5px;line-height:28px;color:#3b3b3b;font-weight:700;transform:scaleX(.86);transform-origin:left;text-shadow:0.4px 0 0 #3b3b3b;">B</span>
<svg style="left:340px;top:525px" width="25" height="28" viewBox="0 0 25 28"><path d="M8.3 7.3 H17.6 V9.4 H14.7 L11.9 20.4 H14 V22.5 H5.9 V20.4 H8.7 L11.5 9.4 H8.3 Z" fill="#3b3b3b"/></svg>
<span class="t" style="left:376.60px;top:527.30px;font-size:19px;line-height:25px;color:#3b3b3b;font-weight:700;transform:scaleX(.9);transform-origin:left;text-shadow:0.4px 0 0 #3b3b3b;">U</span>
<div class="a" style="left:376.5px;top:547.3px;width:14px;height:1.5px;background:#3b3b3b"></div>
<span class="t" style="left:419.00px;top:527.31px;font-size:18.5px;line-height:24px;color:#3b3b3b;font-weight:700;letter-spacing:1.125px;">A</span>
<div class="a" style="left:417.5px;top:548px;width:18px;height:2px;background:#8c8c8c"></div>
<span class="t" style="left:450.00px;top:530.52px;font-size:16.5px;line-height:21px;color:#3b3b3b;font-weight:700;letter-spacing:0.578px;">A</span>
<svg style="left:461.8px;top:534.5px" width="6" height="10" viewBox="0 0 6 10"><path d="M1 3.3 L3 0.8 L5 3.3 Z M1 6.2 L3 8.7 L5 6.2 Z" fill="#6b6b6b"/></svg>
<span class="t" style="left:483.00px;top:528.51px;font-size:13.5px;line-height:18px;color:#5a5a5a;font-weight:700;letter-spacing:0.250px;font-family:'Liberation Serif',serif;">a</span>
<span class="t" style="left:492.00px;top:531.52px;font-size:16.5px;line-height:21px;color:#5a5a5a;font-weight:700;letter-spacing:0.750px;font-family:'Liberation Serif',serif;font-style:italic;">a</span>
<svg style="left:483.0px;top:542.0px" width="8" height="8" viewBox="0 0 8 8"><path d="M2 1 V5 H5.5 M4 3.3 L5.8 5 L4 6.7" stroke="#999" stroke-width="1" fill="none"/></svg>
<svg style="left:523.0px;top:532.4px" width="20" height="13" viewBox="0 0 20 13"><path d="M8.3 3 H5.2 C1 3 1 9.4 5.2 9.4 H8.3 M11.7 3 H14.8 C19 3 19 9.4 14.8 9.4 H11.7 M5.8 6.2 H14.2" stroke="#3b3b3b" stroke-width="2.2" fill="none" stroke-linecap="round"/></svg>
<svg style="left:555.0px;top:532.8px" width="20" height="16" viewBox="0 0 20 16"><path d="M8.3 3 H5.2 C1 3 1 9.4 5.2 9.4 H8.3 M11.7 3 H14.8 C18.2 3 19 6 17.6 7.8 M5.8 6.2 H14.2" stroke="#3b3b3b" stroke-width="2.2" fill="none" stroke-linecap="round"/><path d="M12.5 9.5 L18 15 M18 9.5 L12.5 15" stroke="#3b3b3b" stroke-width="2"/></svg>
<svg style="left:600.0px;top:533.8px" width="15.4" height="14" viewBox="0 0 15.4 14"><path d="M0 1.1 H9 M0 5 H14.3 M0 8.9 H9 M0 12.8 H15.2" stroke="#111" stroke-width="2.2"/></svg>
<svg style="left:630px;top:520px" width="140" height="40" viewBox="0 0 140 40">
<g stroke="#3b3b3b" fill="none">
<circle cx="15.9" cy="16.2" r="2.3" fill="#3b3b3b" stroke="none"/><circle cx="15.9" cy="24.9" r="2.3" fill="#3b3b3b" stroke="none"/>
<path d="M21.2 14.3 H30 M21.2 17 H30 M21.2 23.2 H30 M21.2 25.8 H30" stroke-width="1.3"/>
<path d="M46.3 15.2 L48 14 V19.8 M46 24 C46.5 22.8 49.2 22.6 49.2 24.4 C49.2 25.6 46.2 26.4 46.2 28.2 H49.6" stroke-width="1.3"/>
<path d="M52.2 14.3 H60.6 M52.2 17 H60.6 M52.2 23.2 H60.6 M52.2 25.8 H60.6" stroke-width="1.3"/>
<path d="M85.3 12.4 V28.8" stroke-width="1.3"/>
<path d="M87.5 15.5 H94.9 M87.5 20.6 H94.9 M87.5 25.7 H94.9" stroke-width="1.3"/><path d="M87.5 18.1 H91.6 M87.5 23.2 H91.6" stroke-width="1.3" stroke="#777"/>
<path d="M83.4 20.6 H78 M80.2 18.4 L77.6 20.6 L80.2 22.8" stroke-width="1.3"/><path d="M79.8 15.5 H83.6 M79.8 25.7 H83.6" stroke-width="1" stroke-dasharray="1 1" stroke="#777"/>
<path d="M117.4 12.4 V28.8" stroke-width="1.3"/>
<path d="M119.6 15.5 H127 M119.6 20.6 H127 M119.6 25.7 H127" stroke-width="1.3"/><path d="M119.6 18.1 H123.7 M119.6 23.2 H123.7" stroke-width="1.3" stroke="#777"/>
<path d="M109 20.6 H115 M112.6 18.4 L115.2 20.6 L112.6 22.8" stroke-width="1.3"/><path d="M111.4 15.5 H115.4 M111.4 25.7 H115.4" stroke-width="1" stroke-dasharray="1 1" stroke="#777"/>
</g></svg>
<svg style="left:781.8px;top:531.0px" width="18" height="18" viewBox="0 0 18 18"><circle cx="9" cy="9" r="7.9" stroke="#3b3b3b" stroke-width="1.7" fill="none"/><circle cx="6.2" cy="6.8" r="1.4" fill="#3b3b3b"/><circle cx="11.8" cy="6.8" r="1.4" fill="#3b3b3b"/><path d="M4.8 10.6 C6.5 14 11.5 14 13.2 10.6" stroke="#3b3b3b" stroke-width="1.5" fill="none"/></svg>
<svg style="left:813.8px;top:532.3px" width="18" height="15" viewBox="0 0 18 15"><rect x="0.8" y="0.8" width="16.4" height="13.4" stroke="#3b3b3b" stroke-width="1.6" fill="#fff"/><path d="M2 13 L6.5 7 L9.5 10.5 L12 8.2 L16 13 Z" fill="#3b3b3b"/><circle cx="5" cy="4.6" r="1.5" fill="#3b3b3b"/></svg>
<svg style="left:846.0px;top:530.1px" width="20" height="19" viewBox="0 0 20 19"><rect x="6.5" y="0.5" width="13" height="13" fill="#8a8a8a" stroke="#555"/><rect x="8.8" y="0.5" width="8.4" height="13" fill="#b8b8b8"/><path d="M8.8 4.8 H17.2 M8.8 9 H17.2" stroke="#6a6a6a" stroke-width="0.8"/><path d="M7.6 1.5 V13 M18.4 1.5 V13" stroke="#d0d0d0" stroke-width="0.9" stroke-dasharray="1 1.2"/><rect x="0.5" y="5.5" width="13" height="13" fill="#7a7a7a" stroke="#444"/><rect x="2.8" y="5.5" width="8.4" height="13" fill="#adadad"/><path d="M2.8 9.8 H11.2 M2.8 14 H11.2" stroke="#5a5a5a" stroke-width="0.8"/><path d="M1.6 6.5 V18 M12.4 6.5 V18" stroke="#cfcfcf" stroke-width="0.9" stroke-dasharray="1 1.2"/></svg>
<svg style="left:877.9px;top:530.25px" width="19" height="19.5" viewBox="0 0 19 19.5"><rect x="0" y="0" width="19" height="15" fill="#bdbdbd"/><path d="M7 2.6 H16.2 M2.6 5.6 H16.2 M2.6 8.4 H16.2 M2.6 11.2 H16.2" stroke="#333" stroke-width="1.5"/><rect x="2.6" y="2" width="3.4" height="3.2" fill="#1c1c1c"/><rect x="0" y="14" width="8" height="4" fill="#c9c9c9"/><path d="M2.2 15.6 H6" stroke="#444" stroke-width="1.2"/><path d="M7.6 15.2 H11.6 M9.6 15.2 V19 M7.6 19 H11.6" stroke="#222" stroke-width="1.2"/></svg>
<svg style="left:921.4px;top:530.4000000000001px" width="19" height="18.6" viewBox="0 0 19 18.6"><path d="M2.2 0.8 H16.8 C17.8 0.8 18.2 1.4 18.2 2.2 V15.8 C18.2 16.8 17.6 17.2 16.8 17.2 H2.2 C1.2 17.2 0.8 16.6 0.8 15.8 V2.2 C0.8 1.2 1.4 0.8 2.2 0.8 Z" fill="#3b3b3b"/><rect x="3.6" y="2.6" width="11.8" height="5.2" rx="0.6" fill="#f3f8fc"/><rect x="5.2" y="11" width="8.6" height="6.2" fill="#f3f8fc"/><rect x="6.6" y="12.4" width="2.6" height="3.6" fill="#3b3b3b"/></svg>
<svg style="left:964.0px;top:533.0px" width="18" height="14" viewBox="0 0 18 14"><path d="M0.5 6.2 L7.5 0.5 V4 C13 4 17 7 17.5 13.5 C15.5 10 12.5 8.6 7.5 8.6 V12 Z" fill="#3b3b3b"/></svg>
<svg style="left:996.6px;top:533.0px" width="18" height="14" viewBox="0 0 18 14"><path d="M17.5 6.2 L10.5 0.5 V4 C5 4 1 7 0.5 13.5 C2.5 10 5.5 8.6 10.5 8.6 V12 Z" fill="#3b3b3b"/></svg>
<svg style="left:1125px;top:520px" width="100" height="40" viewBox="0 0 100 40">
<path d="M20.6 12.3 H32.9 V13.9 H30.3 L26 24.6 H21.9 L26.2 13.9 H20.6 Z" fill="#3b3b3b"/>
<path d="M19.2 26.8 H28" stroke="#3b3b3b" stroke-width="1.4"/>
<path d="M29.4 23 L35.8 29.6 M35.8 23 L29.4 29.6" stroke="#3b3b3b" stroke-width="1.8"/>
<path d="M70.6 28.3 H63.7 V16.2 L68.6 11.6 H76.6 V17" stroke="#3b3b3b" stroke-width="1.6" fill="none"/>
<path d="M72.3 17.6 C69.2 19 69.2 23.6 72.3 25 V28.6 C72.3 30.4 76 30.4 76 28.6 V25 C79.2 23.6 79.2 19 76 17.6 V21.3 C76 22.6 72.3 22.6 72.3 21.3 Z" fill="#3b3b3b"/>
</svg>
<span class="t" style="left:305.50px;top:573.70px;font-size:20px;line-height:26px;color:#141414;letter-spacing:-0.066px;">Pháp là quốc gia nổi tiếng với các loại rượu vang: có mẫu mã đẹp, chất lượng rượu ngon, giá thành</span>
<span class="t" style="left:305.50px;top:601.70px;font-size:20px;line-height:26px;color:#141414;letter-spacing:-0.006px;">hợp lý,... Ngoài dung tích 750ml thì loại 3l cũng được khá nhiều người lựa chọn, trong đó phải kể</span>
<span class="t" style="left:305.50px;top:629.70px;font-size:20px;line-height:26px;color:#141414;letter-spacing:-0.125px;">đến đó là 1982 Bordeaux Famille Merlot. Vậy</span>
<div class="a" style="left:700.7px;top:628px;width:471.3px;height:28px;background:#3390ff"></div>
<div class="a" style="left:305px;top:656px;width:107px;height:28px;background:#3390ff"></div>
<span class="t" style="left:707.50px;top:629.70px;font-size:20px;line-height:26px;color:#fff;letter-spacing:-0.122px;">rượu vang 1982 Merlot 3l giá bao nhiêu? Mua ở đâu</span>
<span class="t" style="left:305.50px;top:657.70px;font-size:20px;line-height:26px;color:#fff;letter-spacing:-0.461px;">chính hãng?</span>
<span class="t" style="left:305.50px;top:713.70px;font-size:20px;line-height:26px;color:#141414;font-weight:700;letter-spacing:0.618px;">Vin De Franc 1982 Bordeaux Famille Merlot</span>
<div class="a" style="left:306.5px;top:780.2px;width:2.2px;height:2.4px;background:#222"></div>
<span class="t" style="left:362.50px;top:769.70px;font-size:20px;line-height:26px;color:#141414;font-weight:700;letter-spacing:0.411px;">Tên sản phẩm</span>
<span class="t" style="left:502.00px;top:769.70px;font-size:20px;line-height:26px;color:#141414;letter-spacing:0.189px;">: 1982 Merlot</span>
<div class="a" style="left:306.5px;top:836.2px;width:2.2px;height:2.4px;background:#222"></div>
<span class="t" style="left:362.50px;top:825.70px;font-size:20px;line-height:26px;color:#141414;font-weight:700;letter-spacing:0.664px;">Xuất xứ</span>
<span class="t" style="left:441.50px;top:825.70px;font-size:20px;line-height:26px;color:#141414;letter-spacing:-0.266px;">: Pháp</span>
<div class="a" style="left:306.5px;top:892.2px;width:2.2px;height:2.4px;background:#222"></div>
<span class="t" style="left:362.50px;top:881.70px;font-size:20px;line-height:26px;color:#141414;font-weight:700;letter-spacing:0.691px;">Hãng sản xuất</span>
<span class="t" style="left:508.00px;top:881.70px;font-size:20px;line-height:26px;color:#141414;letter-spacing:-0.358px;">: UG Bordeaux</span>
<div class="a" style="left:306.5px;top:948.2px;width:2.2px;height:2.4px;background:#222"></div>
<span class="t" style="left:362.50px;top:937.70px;font-size:20px;line-height:26px;color:#141414;font-weight:700;letter-spacing:0.136px;">Quy cách</span>
<span class="t" style="left:454.00px;top:937.70px;font-size:20px;line-height:26px;color:#141414;letter-spacing:0.153px;">: Bịch 3 lít</span>
<span class="t" style="left:305.50px;top:993.70px;font-size:20px;line-height:26px;color:#141414;letter-spacing:-0.089px;">UG Bordeaux (Pháp) là công ty sản xuất rượu vang nổi tiếng thế giới với đa dạng các dòng sản</span>
<span class="t" style="left:305.50px;top:1021.70px;font-size:20px;line-height:26px;color:#141414;letter-spacing:-0.030px;">phẩm. Rượu vang của công ty luôn được thị trường đón nhận hết sức nồng nhiệt, đặc biệt là 1982</span>
<span class="t" style="left:305.50px;top:1049.70px;font-size:20px;line-height:26px;color:#141414;letter-spacing:-0.104px;">Merlot.</span>
<div class="a" style="left:1474px;top:312px;width:375.5px;height:96px;background:linear-gradient(180deg,#f6fafd 0%,#f0f7fc 45%,#f0f7fc 100%);border-bottom:1px solid #d7edfc"></div>
<div class="a" style="left:1486.3px;top:324px;width:127.7px;height:127.8px;background:#f0f7fc;border:1px solid #a5cae4;border-radius:5px"></div>
<svg style="left:1490.2px;top:327.9px" width="120" height="120" viewBox="0 0 120 120">
<defs>
<filter id="bl" x="-5%" y="-5%" width="110%" height="110%"><feGaussianBlur stdDeviation="0.9"/></filter>
<filter id="bl2" x="-5%" y="-5%" width="110%" height="110%"><feGaussianBlur stdDeviation="1.6"/></filter>
<clipPath id="avc"><rect width="120" height="120"/></clipPath>
<linearGradient id="sky" x1="0" y1="0" x2="0" y2="1"><stop offset="0" stop-color="#e9ebf3"/><stop offset="0.7" stop-color="#dfe3ea"/><stop offset="1" stop-color="#b4bec4"/></linearGradient>
</defs>
<g clip-path="url(#avc)">
<rect width="120" height="120" fill="#78a052"/>
<g filter="url(#bl2)">
<rect x="-3" y="-3" width="126" height="22" fill="url(#sky)"/>
<rect x="-3" y="14.5" width="126" height="6" fill="#9aaaa6"/>
<rect x="-3" y="18.5" width="126" height="6" fill="#7f9a7a"/>
<rect x="-3" y="22" width="126" height="52" fill="#7aa553"/>
<ellipse cx="25" cy="30" rx="28" ry="8" fill="#6f9c4c"/>
<ellipse cx="35" cy="38" rx="30" ry="8" fill="#98bd68"/>
<ellipse cx="20" cy="60" rx="26" ry="8" fill="#5f8a48"/>
<ellipse cx="105" cy="45" rx="18" ry="16" fill="#6ea348"/>
<ellipse cx="108" cy="62" rx="14" ry="9" fill="#8cbb5c"/>
<ellipse cx="110" cy="14" rx="16" ry="16" fill="#5c7248"/>
<ellipse cx="100" cy="4" rx="9" ry="5" fill="#6f8563"/>
<ellipse cx="47" cy="4" rx="16" ry="4" fill="#b9c2b4"/>
<ellipse cx="112" cy="28" rx="10" ry="8" fill="#557848"/>
<rect x="-3" y="60" width="34" height="12" fill="#7a9a5c"/>
<rect x="88" y="62" width="35" height="10" fill="#8fa86a"/>
<path d="M-3 70 L22 70 L52 90 L50 123 L-3 123 Z" fill="#a3927a"/>
<ellipse cx="10" cy="75" rx="12" ry="4" fill="#b08e68"/>
<ellipse cx="25" cy="110" rx="22" ry="10" fill="#a89878"/>
<path d="M50 85 L123 80 L123 123 L48 123 Z" fill="#3b3a30"/>
<ellipse cx="108" cy="106" rx="14" ry="6" fill="#55503f"/>
<ellipse cx="112" cy="61" rx="5" ry="2.5" fill="#c9b58a"/>
<ellipse cx="96" cy="64" rx="4" ry="3" fill="#8a5a30"/>
<ellipse cx="2" cy="119" rx="12" ry="7" fill="#94826a"/>
<ellipse cx="0" cy="90" rx="4.5" ry="11" fill="#3d342e"/>
<ellipse cx="70" cy="112" rx="16" ry="8" fill="#4a4438"/>
</g>
<g filter="url(#bl)">
<!-- barrier -->
<path d="M0 44 L34 48 L33 58 L0 53 Z" fill="#ead9cf"/>
<path d="M2 44.5 L9 45.5 L8.5 50 L1.5 49 Z M15 46.5 L24 47.6 L23.5 52.5 L14.5 51.5 Z M0 50.5 L5 51 L4.8 53.6 L0 53 Z M13 53 L21 54 L20.8 56.5 L12.8 55.5 Z M31 49 L34 49.3 L33.5 54 L30.5 53.6Z" fill="#d23c33"/>
<path d="M0 36 L6 40 L1 47 L0 47 Z" fill="#4a3d33"/>
<!-- bike body -->
<path d="M27 62 L40 58 L58 60 L70 72 L120 70 L120 102 L70 104 L52 98 L36 78 L27 68 Z" fill="#2a2224"/>
<path d="M28 60 L42 52 L50 56 L44 66 L32 70 Z" fill="#1d1c20"/>
<path d="M36 47 L44 45 L46 52 L38 54 Z" fill="#3a3f3c"/>
<path d="M40 50 L52 47 L54 54 L42 57 Z" fill="#8c9096"/>
<!-- wheel -->
<circle cx="29.5" cy="91" r="13" fill="none" stroke="#2b2222" stroke-width="4.2"/>
<circle cx="29.5" cy="91" r="9.5" fill="#8f8572"/>
<path d="M22 86 L36 96 M24 97 L35 84 M29.5 82 L29.5 100" stroke="#2a2a28" stroke-width="1.6"/>
<circle cx="29.5" cy="91" r="3" fill="#3a2a28"/>
<path d="M24 80 L30 76 L52 92 L48 97 Z" fill="#6a4a42"/>
<path d="M25 78 L33 74 L38 84 L30 90 Z" fill="#7a3a30"/>
<!-- seat and tail -->
<path d="M74 76 L120 72 L120 82 L84 86 Z" fill="#1b1b1e"/>
<path d="M84 89 L120 82 L120 90 L86 96 Z" fill="#7a2734"/>
<path d="M112 83 L120 81.5 L120 85 L113 86Z" fill="#c3242f"/>
<path d="M112 93 L120 92 L120 96 L113 97Z" fill="#3f8a45"/>
<!-- red frame -->
<path d="M73 100 L82 100 L90 111 L92 116 L86 117 L80 110 Z" fill="#d0202c"/>
<path d="M86 113 L94 109 L96 113 L88 117 Z" fill="#d0202c"/>
<path d="M94 110 L120 118 L120 121 L93 113 Z" fill="#6a5a52"/>
<!-- legs -->
<path d="M62 72 L88 76 L84 84 L66 96 L62 120 L50 120 L50 96 L56 82 Z" fill="#27303f"/>
<!-- jacket -->
<path d="M62 30 C70 24 80 28 84 36 C92 44 95 58 93 66 C90 74 82 76 72 74 L60 72 C56 70 56 62 58 58 L42 60 C38 60 36 56 38 53 L52 48 C58 42 58 34 62 30 Z" fill="#1f2029"/>
<path d="M66 40 C74 36 82 44 84 56 C84 64 78 70 70 70 C74 60 72 48 66 40 Z" fill="#2a2c3a"/>
<path d="M38 53 L48 49 L52 56 L42 60 Z" fill="#4a4f55"/>
<!-- helmet -->
<ellipse cx="67.2" cy="14.8" rx="11.2" ry="10" fill="#24242a"/>
<path d="M58 16 C58 22 60 27 63 29 L72 27 L78 22 C79 18 78 14 76 12 Z" fill="#26262c"/>
<path d="M59.5 17 C62 15.5 68 15 70.5 16.5 L70 20 L60 21 Z" fill="#5a4a44"/>
<path d="M59.8 20.5 C62.5 18.5 67.5 18.3 70.5 19.6 C71 24 69 28.5 65.5 29.8 C62.5 29.3 60.2 25.5 59.8 20.5 Z" fill="#5590c0"/>
<ellipse cx="61" cy="9" rx="2.2" ry="1.2" fill="#8a8a92" opacity="0.7"/>
<!-- tree trunks thin -->
<path d="M50 0 L51.5 18 M38 4 L44 0 M60 2 L66 0" stroke="#8d9a86" stroke-width="1.2" opacity="0.8"/>
</g>
</g>
</svg>

<span class="t" style="left:1620.00px;top:325.21px;font-size:17.5px;line-height:23px;color:#008560;font-weight:700;letter-spacing:0.575px;">anhbh</span>
<span class="t" style="left:1620.00px;top:348.80px;font-size:13.75px;line-height:18px;color:#969696;letter-spacing:-0.053px;">Bài viết:</span>
<span class="t" style="left:1700.00px;top:348.80px;font-size:13.75px;line-height:18px;color:#141414;width:136.3px;text-align:right;">739</span>
<span class="t" style="left:1620.00px;top:364.00px;font-size:13.75px;line-height:18px;color:#969696;letter-spacing:-0.044px;">Thích:</span>
<span class="t" style="left:1700.00px;top:364.00px;font-size:13.75px;line-height:18px;color:#141414;width:136.3px;text-align:right;">9</span>
<span class="t" style="left:1620.00px;top:379.20px;font-size:13.75px;line-height:18px;color:#969696;letter-spacing:-0.102px;">Điểm:</span>
<span class="t" style="left:1700.00px;top:379.20px;font-size:13.75px;line-height:18px;color:#141414;width:136.3px;text-align:right;">18</span>
<div class="a" style="left:1474px;top:468px;width:375.5px;height:567px;background:linear-gradient(180deg,#f6fafd 0%,#f0f7fc 6%,#f0f7fc 100%);border-bottom:1px solid #d7edfc"></div>
<span class="t" style="left:1486.60px;top:480.71px;font-size:16.25px;line-height:21px;color:#ff0000;letter-spacing:0.219px;">LÀM THẾ NÀO TOPIC CÓ NHIỀU NGƯỜI</span>
<span class="t" style="left:1486.60px;top:501.71px;font-size:16.25px;line-height:21px;color:#ff0000;letter-spacing:0.038px;">ĐỌC</span>
<span class="t" style="left:1486.60px;top:627.71px;font-size:16.25px;line-height:21px;color:#ff0000;letter-spacing:0.233px;">HƯỚNG DẪN ĐĂNG TOPIC BÁN HÀNG</span>
<span class="t" style="left:1486.60px;top:774.71px;font-size:16.25px;line-height:21px;color:#ff0000;letter-spacing:0.201px;">CÁC QUY ĐỊNH</span>
<span class="t" style="left:1486.60px;top:543.71px;font-size:16.25px;line-height:21px;color:#1a8a68;letter-spacing:0.193px;"><span style="color:#141414">- </span>Hướng dẫn gắn tag cho topic</span>
<span class="t" style="left:1486.60px;top:564.71px;font-size:16.25px;line-height:21px;color:#1a8a68;letter-spacing:0.181px;"><span style="color:#141414">- </span>Hướng dẫn thiết kế topic chuẩn SEO</span>
<span class="t" style="left:1486.60px;top:585.71px;font-size:16.25px;line-height:21px;color:#1a8a68;letter-spacing:0.198px;"><span style="color:#141414">- </span>Hướng dẫn làm topic kiểu mục lục</span>
<span class="t" style="left:1486.60px;top:669.71px;font-size:16.25px;line-height:21px;color:#1a8a68;letter-spacing:0.172px;"><span style="color:#141414">- </span>Để mỗi bài là một nhân viên</span>
<span class="t" style="left:1486.60px;top:690.71px;font-size:16.25px;line-height:21px;color:#1a8a68;letter-spacing:0.159px;"><span style="color:#141414">- </span>UP bài bất lợi ra sao</span>
<span class="t" style="left:1486.60px;top:711.71px;font-size:16.25px;line-height:21px;color:#1a8a68;letter-spacing:0.180px;"><span style="color:#141414">- </span>10 Bí quyết bán hàng hiệu quả</span>
<span class="t" style="left:1486.60px;top:732.71px;font-size:16.25px;line-height:21px;color:#1a8a68;letter-spacing:0.177px;"><span style="color:#141414">- </span>Bí quyết để khách hàng luôn quay lại</span>
<span class="t" style="left:1486.60px;top:816.71px;font-size:16.25px;line-height:21px;color:#1a8a68;letter-spacing:0.196px;"><span style="color:#141414">- </span>Hướng dẫn cho người mới</span>
<span class="t" style="left:1486.60px;top:837.71px;font-size:16.25px;line-height:21px;color:#1a8a68;letter-spacing:0.175px;"><span style="color:#141414">- </span>Quy định chung</span>
<span class="t" style="left:1486.60px;top:858.71px;font-size:16.25px;line-height:21px;color:#1a8a68;letter-spacing:0.189px;"><span style="color:#141414">- </span>QĐ hoạt động cộng đồng</span>
<span class="t" style="left:1486.60px;top:879.71px;font-size:16.25px;line-height:21px;color:#1a8a68;letter-spacing:0.189px;"><span style="color:#141414">- </span>Quy định khi mua/bán</span>
<span class="t" style="left:1486.60px;top:900.71px;font-size:16.25px;line-height:21px;color:#1a8a68;letter-spacing:0.168px;"><span style="color:#141414">- </span>Quy định khi thanh lý</span>
<span class="t" style="left:1486.60px;top:921.71px;font-size:16.25px;line-height:21px;color:#1a8a68;letter-spacing:0.181px;"><span style="color:#141414">- </span>Quy định về đấu giá</span>
<span class="t" style="left:1486.60px;top:942.71px;font-size:16.25px;line-height:21px;color:#1a8a68;letter-spacing:0.165px;"><span style="color:#141414">- </span>Quy định đối chất</span>
<span class="t" style="left:1486.60px;top:963.71px;font-size:16.25px;line-height:21px;color:#1a8a68;letter-spacing:0.172px;"><span style="color:#141414">- </span>Lý do để bị khoá nick</span>
<span class="t" style="left:1486.60px;top:984.71px;font-size:16.25px;line-height:21px;color:#1a8a68;letter-spacing:0.179px;"><span style="color:#141414">- </span>Tổng hợp hướng dẫn và giải đáp</span>
<div class="a" style="left:1655px;top:989px;width:238px;height:83.5px;background:rgba(22,22,24,.95);border-radius:5px;box-shadow:0 0 4px rgba(0,0,0,.45)"></div>
<svg style="left:1663.5px;top:998.5px" width="19" height="18" viewBox="0 0 19 18"><circle cx="5.6" cy="5.4" r="3.9" stroke="#7aa7dc" stroke-width="2.5" fill="none"/><circle cx="12.6" cy="12" r="3.9" stroke="#7aa7dc" stroke-width="2.5" fill="none"/><path d="M7 7 L11 11" stroke="#9cc0ea" stroke-width="2.5"/></svg>
<span class="t" style="left:1685.80px;top:997.81px;font-size:15px;line-height:20px;color:#f2f2f2;letter-spacing:-0.719px;text-shadow:0 0 1px rgba(255,255,255,.45);">NoFollow</span>
<div class="a" style="left:1867.2px;top:999.4px;width:14.5px;height:14px;background:linear-gradient(180deg,#7fb9de,#8fcbea);border:2px solid #b5dcf2;border-radius:1px"></div>
<div class="a" style="left:1870.7px;top:1005.5px;width:7.5px;height:1.8px;background:#f4fbff"></div>
<div class="a" style="left:1661.7px;top:1018px;width:225.5px;height:1px;background:#4a4a4c"></div>
<span class="t" style="left:1661.70px;top:1024.90px;font-size:14px;line-height:18px;color:#ececec;letter-spacing:-0.306px;text-shadow:0 0 1px rgba(255,255,255,.4);">META-Robots NoFollow:</span>
<span class="t" style="left:1845.00px;top:1024.90px;font-size:14px;line-height:18px;color:#ececec;letter-spacing:-0.445px;">false</span>
<span class="t" style="left:1661.70px;top:1048.81px;font-size:14px;line-height:18px;color:#ececec;letter-spacing:-0.342px;text-shadow:0 0 1px rgba(255,255,255,.4);">META-Robots NoIndex:</span>
<span class="t" style="left:1848.30px;top:1048.81px;font-size:14px;line-height:18px;color:#ea6b6b;letter-spacing:0.125px;">true</span>
<div class="a" style="left:0px;top:1078px;width:1920px;height:2px;background:#2a2a2a"></div>
<div class="a" style="left:277px;top:1078px;width:40px;height:2px;background:#6d6d6d"></div>
</div>
</body></html>
